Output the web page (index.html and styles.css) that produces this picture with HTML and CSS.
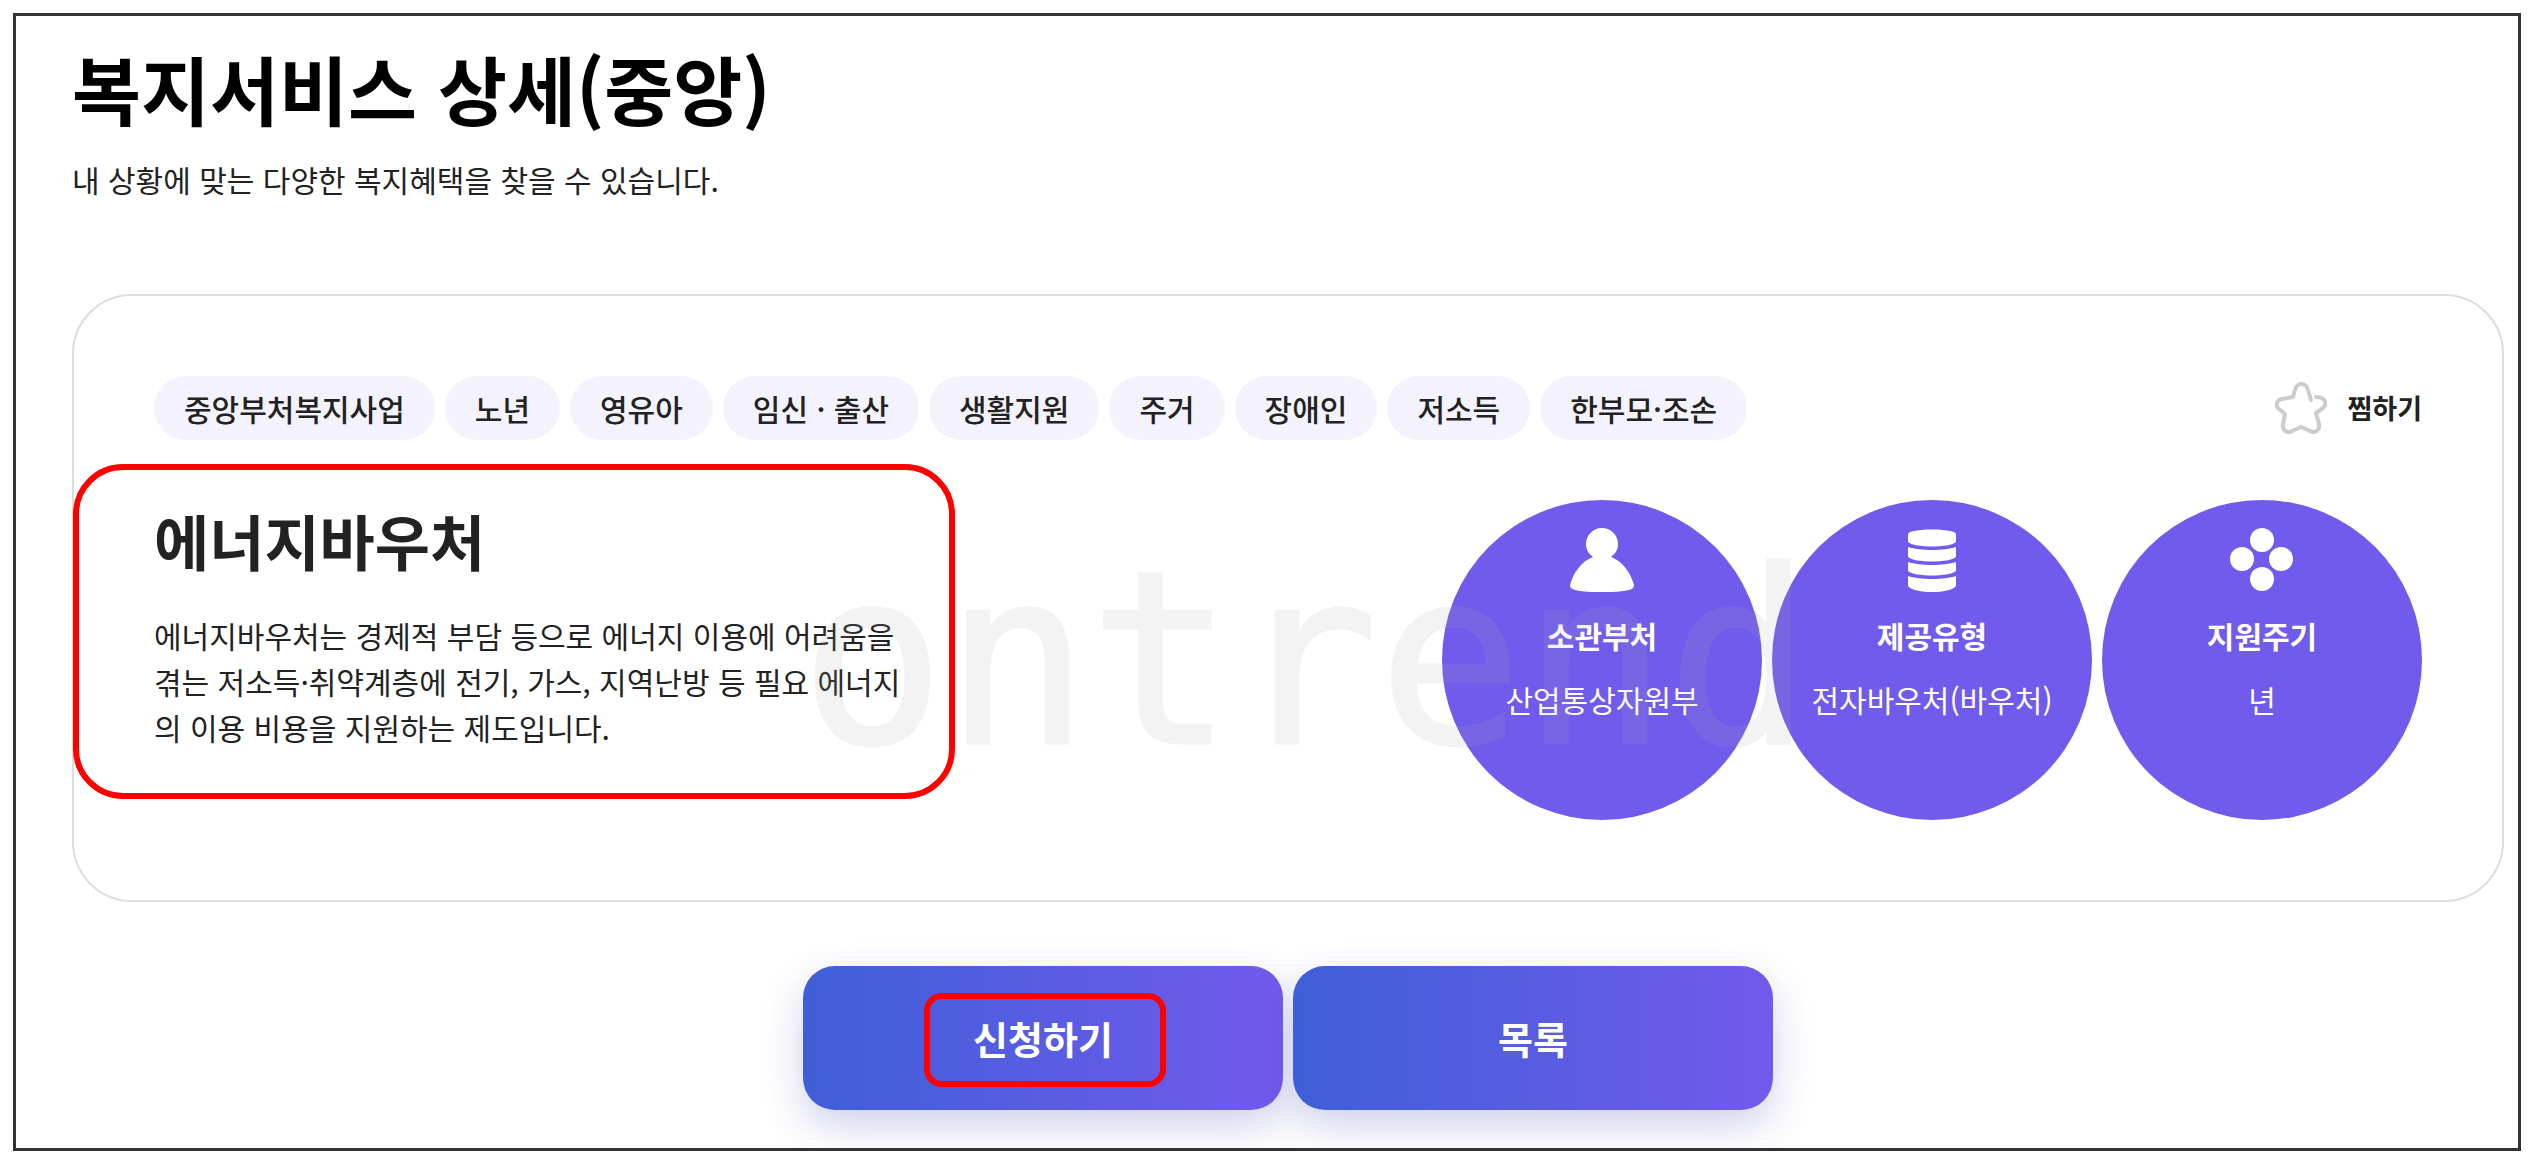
FILE: index.html
```html
<!DOCTYPE html>
<html lang="ko">
<head>
<meta charset="utf-8">
<meta name="viewport" content="width=device-width, initial-scale=1">
<title>복지서비스 상세(중앙)</title>
<link rel="stylesheet" href="styles.css">
</head>
<body>
<main class="frame">
  <header class="page-head">
    <h1 class="page-title">복지서비스 상세(중앙)</h1>
    <p class="page-lead">내 상황에 맞는 다양한 복지혜택을 찾을 수 있습니다.</p>
  </header>

  <section class="card">
    <div class="card-top">
      <ul class="tags">
        <li class="tag">중앙부처복지사업</li>
        <li class="tag">노년</li>
        <li class="tag">영유아</li>
        <li class="tag">임신 · 출산</li>
        <li class="tag">생활지원</li>
        <li class="tag">주거</li>
        <li class="tag">장애인</li>
        <li class="tag">저소득</li>
        <li class="tag">한부모·조손</li>
      </ul>
      <button type="button" class="bookmark">
        <svg class="bookmark-icon" viewBox="0 0 52 52" aria-hidden="true">
          <path d="M36 18 L33 8 C31 0 22 0 20 8 L18 15 L7 17 C1 18 0 24 4 27 L10 32 L8 42 C7 48 12 52 17 49 L26 45 L35 49 C40 52 45 48 44 42 L41 31 L48 26 C53 21 50 15 41 15"/>
        </svg>
        <span>찜하기</span>
      </button>
    </div>

    <div class="card-body">
      <div class="intro">
        <h2 class="intro-title">에너지바우처</h2>
        <p class="intro-text">에너지바우처는 경제적 부담 등으로 에너지 이용에 어려움을 겪는 저소득·취약계층에 전기, 가스, 지역난방 등 필요 에너지의 이용 비용을 지원하는 제도입니다.</p>
      </div>
      <dl class="facts">
        <div class="fact">
          <svg class="fact-icon" viewBox="0 0 64 64" aria-hidden="true">
            <path d="M32 0 C41 0 48 7 48 16 C48 22 45 26 41 29 C53 33 61 46 64 57 C64 60 62 61 59 62 C46 65 18 65 5 62 C2 61 0 60 0 57 C3 46 11 33 23 29 C19 26 16 22 16 16 C16 7 23 0 32 0 Z"/>
          </svg>
          <dt>소관부처</dt>
          <dd>산업통상자원부</dd>
        </div>
        <div class="fact">
          <svg class="fact-icon" viewBox="0 0 64 64" aria-hidden="true">
            <path d="M8 6 C8 0 56 0 56 6 V14 C50 20 14 20 8 14 Z"/>
            <path d="M8 19 C20 23 44 23 56 19 V29 C50 35 14 35 8 29 Z"/>
            <path d="M8 34 C20 38 44 38 56 34 V43 C50 49 14 49 8 43 Z"/>
            <path d="M8 48 C20 52 44 52 56 48 V58 C50 66 14 66 8 58 Z"/>
          </svg>
          <dt>제공유형</dt>
          <dd>전자바우처(바우처)</dd>
        </div>
        <div class="fact">
          <svg class="fact-icon" viewBox="0 0 64 64" aria-hidden="true">
            <circle cx="32" cy="12" r="12"/>
            <circle cx="12" cy="31" r="12"/>
            <circle cx="51" cy="31" r="12"/>
            <circle cx="32" cy="51" r="12"/>
          </svg>
          <dt>지원주기</dt>
          <dd>년</dd>
        </div>
      </dl>
      <div class="watermark" aria-hidden="true">ontrend</div>
    </div>
  </section>

  <div class="actions">
    <button type="button" class="action"><span class="marked">신청하기</span></button>
    <button type="button" class="action">목록</button>
  </div>
</main>
</body>
</html>
```
FILE: styles.css
```css
* {
  box-sizing: border-box;
}

body {
  margin: 13px;
  background: #fff;
  color: #222;
  font-family: "Noto Sans CJK KR", "Noto Sans", sans-serif;
  font-size: 30px;
  line-height: 46px;
}

h1, h2, p, ul, dl, dd {
  margin: 0;
  padding: 0;
}

button {
  padding: 0;
  border: 0;
  background: none;
  color: inherit;
  font: inherit;
  cursor: pointer;
}

.frame {
  padding: 24px 14px 38px 56px;
  border: 3px solid #333236;
}

.page-head {
  display: flex;
  flex-direction: column;
  gap: 20px;
  margin-bottom: 92px;
}

.page-title {
  color: #000;
  font-size: 75px;
  font-weight: 700;
  line-height: 96px;
}

.card {
  display: flex;
  flex-direction: column;
  gap: 60px;
  padding: 80px;
  border: 2px solid #ddd;
  border-radius: 60px;
}

.card-top {
  display: flex;
  justify-content: space-between;
  align-items: center;
}

.tags {
  display: flex;
  flex-wrap: wrap;
  gap: 10px;
  list-style: none;
}

.tag {
  padding: 9px 30px;
  border-radius: 32px;
  background: #f4f2fc;
  font-weight: 500;
}

.bookmark {
  display: flex;
  align-items: center;
  gap: 20px;
  font-size: 27px;
  font-weight: 700;
}

.bookmark-icon {
  width: 52px;
  height: 52px;
  fill: none;
  stroke: #ccc;
  stroke-width: 4;
  stroke-linecap: round;
  stroke-linejoin: round;
}

.card-body {
  position: relative;
  display: flex;
  justify-content: space-between;
  align-items: flex-start;
}

.intro {
  position: relative;
  display: flex;
  flex-direction: column;
  gap: 32px;
  flex: 0 1 748px;
}

.intro::after {
  content: "";
  position: absolute;
  inset: -36px -53px -49px -81px;
  border: 6px solid #f00;
  border-radius: 50px;
  pointer-events: none;
}

.intro-title {
  font-size: 60px;
  font-weight: 700;
  line-height: 80px;
}

.facts {
  display: flex;
  gap: 10px;
}

.fact {
  display: flex;
  flex-direction: column;
  align-items: center;
  width: 320px;
  height: 320px;
  padding-top: 28px;
  border-radius: 50%;
  background: #705bec;
  color: #fff;
}

.fact-icon {
  width: 64px;
  height: 64px;
  margin-bottom: 20px;
  fill: #fff;
}

.fact dt {
  margin-bottom: 18px;
  font-weight: 700;
}

.watermark {
  position: absolute;
  inset: 0;
  display: flex;
  justify-content: center;
  align-items: center;
  padding-left: 36px;
  color: #acacac;
  font-family: "DejaVu Sans Mono", monospace;
  font-size: 240px;
  line-height: 1;
  opacity: 0.13;
  -webkit-text-stroke: 3px #acacac;
  pointer-events: none;
}

.actions {
  display: flex;
  justify-content: center;
  gap: 10px;
  margin-top: 64px;
}

.action {
  flex: 0 1 480px;
  height: 144px;
  border-radius: 32px;
  background: linear-gradient(90deg, #3e5fd7, #725aec);
  box-shadow: 0 16px 40px rgba(60, 60, 170, 0.24);
  color: #fff;
  font-size: 38px;
  font-weight: 700;
}

.marked {
  position: relative;
}

.marked::after {
  content: "";
  position: absolute;
  inset: -17px -53px -22px -49px;
  border: 6px solid #f00;
  border-radius: 18px;
}
```
